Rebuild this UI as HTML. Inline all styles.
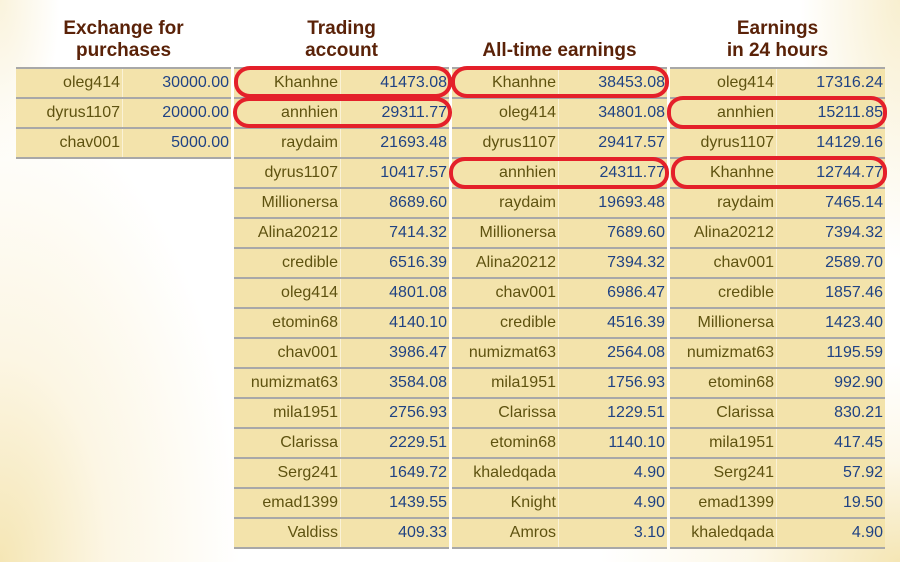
<!DOCTYPE html>
<html><head><meta charset="utf-8"><style>
html,body{margin:0;padding:0;width:900px;height:562px;overflow:hidden}
body{position:relative;font-family:"Liberation Sans",Arial,sans-serif;
background:
radial-gradient(ellipse 240px 460px at 0px 562px,#f5e6b5 0%,rgba(250,240,210,.6) 45%,rgba(255,255,255,0) 100%),
radial-gradient(ellipse 300px 200px at 900px 562px,#f5e6b5 0%,rgba(250,240,210,.5) 50%,rgba(255,255,255,0) 100%),
radial-gradient(ellipse 100px 260px at 900px 0px,#f8efd0 0%,rgba(255,255,255,0) 100%),
radial-gradient(ellipse 60px 160px at 0px 0px,#faf3dc 0%,rgba(255,255,255,0) 100%),#fff}
.h{position:absolute;top:18px;width:215px;text-align:center;font-weight:bold;font-size:19px;line-height:22px;color:#5a2208}
.t{position:absolute;top:67px;width:215px;border-bottom:2px solid #a8a8a8}
.r{height:28px;border-top:2px solid #a8a8a8;background:#f3e3ab;display:flex;font-size:16px;line-height:28px}
.r span{display:block;text-align:right;padding-right:2px;box-sizing:border-box}
.r .n{width:107px;color:#5e5210;border-right:1px solid #faf2d6}
.r .v{width:108px;color:#1f4284}
.o{position:absolute;border:4px solid #e4202a;border-radius:16px/15px;box-sizing:border-box}
</style></head><body>
<div class="h" style="left:16px">Exchange for<br>purchases</div>
<div class="h" style="left:234px">Trading<br>account</div>
<div class="h" style="left:452px;top:40px">All-time earnings</div>
<div class="h" style="left:670px">Earnings<br>in 24 hours</div>

<div class="t" style="left:16px">
<div class="r"><span class="n">oleg414</span><span class="v">30000.00</span></div>
<div class="r"><span class="n">dyrus1107</span><span class="v">20000.00</span></div>
<div class="r"><span class="n">chav001</span><span class="v">5000.00</span></div>
</div>

<div class="t" style="left:234px">
<div class="r"><span class="n">Khanhne</span><span class="v">41473.08</span></div>
<div class="r"><span class="n">annhien</span><span class="v">29311.77</span></div>
<div class="r"><span class="n">raydaim</span><span class="v">21693.48</span></div>
<div class="r"><span class="n">dyrus1107</span><span class="v">10417.57</span></div>
<div class="r"><span class="n">Millionersa</span><span class="v">8689.60</span></div>
<div class="r"><span class="n">Alina20212</span><span class="v">7414.32</span></div>
<div class="r"><span class="n">credible</span><span class="v">6516.39</span></div>
<div class="r"><span class="n">oleg414</span><span class="v">4801.08</span></div>
<div class="r"><span class="n">etomin68</span><span class="v">4140.10</span></div>
<div class="r"><span class="n">chav001</span><span class="v">3986.47</span></div>
<div class="r"><span class="n">numizmat63</span><span class="v">3584.08</span></div>
<div class="r"><span class="n">mila1951</span><span class="v">2756.93</span></div>
<div class="r"><span class="n">Clarissa</span><span class="v">2229.51</span></div>
<div class="r"><span class="n">Serg241</span><span class="v">1649.72</span></div>
<div class="r"><span class="n">emad1399</span><span class="v">1439.55</span></div>
<div class="r"><span class="n">Valdiss</span><span class="v">409.33</span></div>
</div>

<div class="t" style="left:452px">
<div class="r"><span class="n">Khanhne</span><span class="v">38453.08</span></div>
<div class="r"><span class="n">oleg414</span><span class="v">34801.08</span></div>
<div class="r"><span class="n">dyrus1107</span><span class="v">29417.57</span></div>
<div class="r"><span class="n">annhien</span><span class="v">24311.77</span></div>
<div class="r"><span class="n">raydaim</span><span class="v">19693.48</span></div>
<div class="r"><span class="n">Millionersa</span><span class="v">7689.60</span></div>
<div class="r"><span class="n">Alina20212</span><span class="v">7394.32</span></div>
<div class="r"><span class="n">chav001</span><span class="v">6986.47</span></div>
<div class="r"><span class="n">credible</span><span class="v">4516.39</span></div>
<div class="r"><span class="n">numizmat63</span><span class="v">2564.08</span></div>
<div class="r"><span class="n">mila1951</span><span class="v">1756.93</span></div>
<div class="r"><span class="n">Clarissa</span><span class="v">1229.51</span></div>
<div class="r"><span class="n">etomin68</span><span class="v">1140.10</span></div>
<div class="r"><span class="n">khaledqada</span><span class="v">4.90</span></div>
<div class="r"><span class="n">Knight</span><span class="v">4.90</span></div>
<div class="r"><span class="n">Amros</span><span class="v">3.10</span></div>
</div>

<div class="t" style="left:670px">
<div class="r"><span class="n">oleg414</span><span class="v">17316.24</span></div>
<div class="r"><span class="n">annhien</span><span class="v">15211.85</span></div>
<div class="r"><span class="n">dyrus1107</span><span class="v">14129.16</span></div>
<div class="r"><span class="n">Khanhne</span><span class="v">12744.77</span></div>
<div class="r"><span class="n">raydaim</span><span class="v">7465.14</span></div>
<div class="r"><span class="n">Alina20212</span><span class="v">7394.32</span></div>
<div class="r"><span class="n">chav001</span><span class="v">2589.70</span></div>
<div class="r"><span class="n">credible</span><span class="v">1857.46</span></div>
<div class="r"><span class="n">Millionersa</span><span class="v">1423.40</span></div>
<div class="r"><span class="n">numizmat63</span><span class="v">1195.59</span></div>
<div class="r"><span class="n">etomin68</span><span class="v">992.90</span></div>
<div class="r"><span class="n">Clarissa</span><span class="v">830.21</span></div>
<div class="r"><span class="n">mila1951</span><span class="v">417.45</span></div>
<div class="r"><span class="n">Serg241</span><span class="v">57.92</span></div>
<div class="r"><span class="n">emad1399</span><span class="v">19.50</span></div>
<div class="r"><span class="n">khaledqada</span><span class="v">4.90</span></div>
</div>

<div class="o" style="left:234px;top:66px;width:218px;height:32px"></div>
<div class="o" style="left:233px;top:97px;width:219px;height:31px"></div>
<div class="o" style="left:451px;top:66px;width:218px;height:32px"></div>
<div class="o" style="left:449px;top:157px;width:220px;height:32px"></div>
<div class="o" style="left:667px;top:96px;width:220px;height:33px"></div>
<div class="o" style="left:671px;top:156px;width:216px;height:33px"></div>
</body></html>
